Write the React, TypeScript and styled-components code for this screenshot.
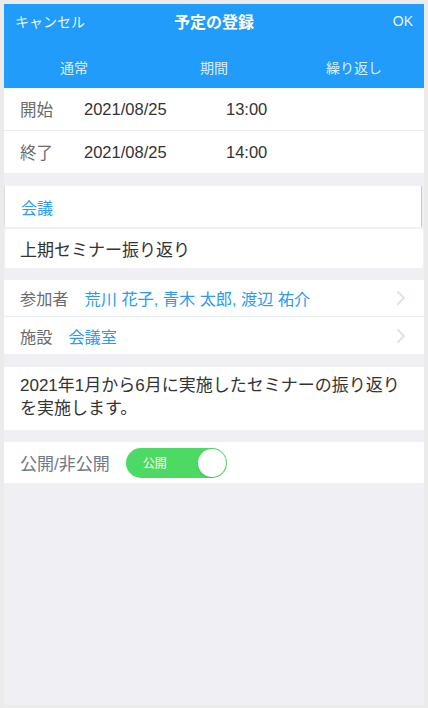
import React from "react";
import styled, { createGlobalStyle } from "styled-components";

const Global = createGlobalStyle`
  html, body { margin: 0; padding: 0; }
  body { font-family: "Liberation Sans", "Noto Sans CJK JP", sans-serif; }
  * { box-sizing: border-box; }
`;

const Frame = styled.div`
  width: 428px;
  height: 708px;
  border: 4px solid #ebebeb;
  border-bottom-width: 3px;
  background: #efeff4;
  display: flex;
  flex-direction: column;
`;

const Header = styled.header`
  background: #229cfb;
  color: #fff;
`;

const TitleBar = styled.div`
  height: 33px;
  display: flex;
  align-items: center;
  justify-content: space-between;
  padding: 0 11px 0 11px;
  position: relative;
`;

const NavButton = styled.span`
  font-size: 14px;
  color: rgba(255, 255, 255, 0.92);
`;

const Title = styled.h1`
  position: absolute;
  left: 0;
  right: 0;
  text-align: center;
  margin: 0;
  font-size: 16px;
  font-weight: bold;
  pointer-events: none;
`;

const Tabs = styled.div`
  height: 51px;
  padding-top: 8px;
  display: grid;
  grid-template-columns: repeat(3, 1fr);
  align-items: center;
`;

const Tab = styled.span`
  text-align: center;
  font-size: 14px;
  color: rgba(255, 255, 255, 0.85);
`;

const Section = styled.section<{ $mt?: number }>`
  background: #fff;
  margin-top: ${(p) => p.$mt ?? 12}px;
`;

const Row = styled.div<{ $h: number; $sep?: boolean; $fs?: number }>`
  height: ${(p) => p.$h}px;
  display: flex;
  align-items: center;
  padding: 0 16px;
  font-size: ${(p) => p.$fs ?? 16}px;
  border-bottom: ${(p) => (p.$sep ? "1px solid #e6ebf0" : "none")};
`;

const Label = styled.span<{ $w?: number; $tone?: string }>`
  color: ${(p) => p.$tone ?? "#6a6a6a"};
  width: ${(p) => (p.$w ? `${p.$w}px` : "auto")};
  flex: none;
  margin-right: ${(p) => (p.$w ? 0 : 16)}px;
`;

const Value = styled.span<{ $w?: number }>`
  color: #333;
  width: ${(p) => (p.$w ? `${p.$w}px` : "auto")};
  flex: none;
`;

const Link = styled.span`
  color: #2a9bf0;
  flex: 1;
`;

const Chevron = styled.svg`
  width: 10px;
  height: 16px;
  flex: none;
  margin-right: 2px;
`;

const CategoryBox = styled.div`
  background: #fff;
  margin-top: 13px;
  height: 41px;
  display: flex;
  align-items: center;
  padding: 0 16px;
  font-size: 16px;
  color: #2a9bf0;
  border-right: 1px solid #c8c8c8;
  border-left: 1px solid #dcdcdc;
  margin-right: 2px;
`;

const TitleField = styled.div`
  background: #fff;
  margin-top: 2px;
  height: 39px;
  display: flex;
  align-items: center;
  padding: 0 16px 0 15px;
  font-size: 17px;
  color: #333;
  border-radius: 2px;
  margin-left: 1px;
  margin-right: 1px;
`;

const Description = styled.p`
  background: #fff;
  margin: 13px 0 0;
  height: 63px;
  padding: 7px 16px 0 16px;
  font-size: 17px;
  line-height: 23px;
  color: #333;
`;

const Toggle = styled.div`
  width: 101px;
  height: 30px;
  border-radius: 15px;
  background: #4cd964;
  display: flex;
  align-items: center;
  justify-content: space-between;
  padding: 0 1px 0 17px;
`;

const ToggleText = styled.span`
  color: #fff;
  font-size: 12px;
`;

const Knob = styled.span`
  width: 28px;
  height: 28px;
  border-radius: 50%;
  background: #fff;
  box-shadow: 0 1px 2px rgba(0, 0, 0, 0.15);
`;

const ChevronIcon = () => (
  <Chevron viewBox="0 0 10 16">
    <path d="M2 2 L8 8 L2 14" fill="none" stroke="#dce4ec" strokeWidth="2.2" strokeLinecap="round" strokeLinejoin="round" />
  </Chevron>
);

export default function App() {
  return (
    <>
      <Global />
      <Frame>
        <Header>
          <TitleBar>
            <NavButton>キャンセル</NavButton>
            <Title>予定の登録</Title>
            <NavButton>OK</NavButton>
          </TitleBar>
          <Tabs>
            <Tab>通常</Tab>
            <Tab>期間</Tab>
            <Tab>繰り返し</Tab>
          </Tabs>
        </Header>

        <Section $mt={0}>
          <Row $h={43} $sep $fs={16.5}>
            <Label $w={64}>開始</Label>
            <Value $w={142}>2021/08/25</Value>
            <Value>13:00</Value>
          </Row>
          <Row $h={42} $fs={16.5}>
            <Label $w={64}>終了</Label>
            <Value $w={142}>2021/08/25</Value>
            <Value>14:00</Value>
          </Row>
        </Section>

        <CategoryBox>会議</CategoryBox>
        <TitleField>上期セミナー振り返り</TitleField>

        <Section $mt={12}>
          <Row $h={37} $sep $fs={16.2}>
            <Label>参加者</Label>
            <Link>荒川 花子, 青木 太郎, 渡辺 祐介</Link>
            <ChevronIcon />
          </Row>
          <Row $h={37} $fs={16.2}>
            <Label>施設</Label>
            <Link>会議室</Link>
            <ChevronIcon />
          </Row>
        </Section>

        <Description>2021年1月から6月に実施したセミナーの振り返りを実施します。</Description>

        <Section $mt={12}>
          <Row $h={41} $fs={17}>
            <Label $tone="#6d7888">公開/非公開</Label>
            <Toggle>
              <ToggleText>公開</ToggleText>
              <Knob />
            </Toggle>
          </Row>
        </Section>
      </Frame>
    </>
  );
}
